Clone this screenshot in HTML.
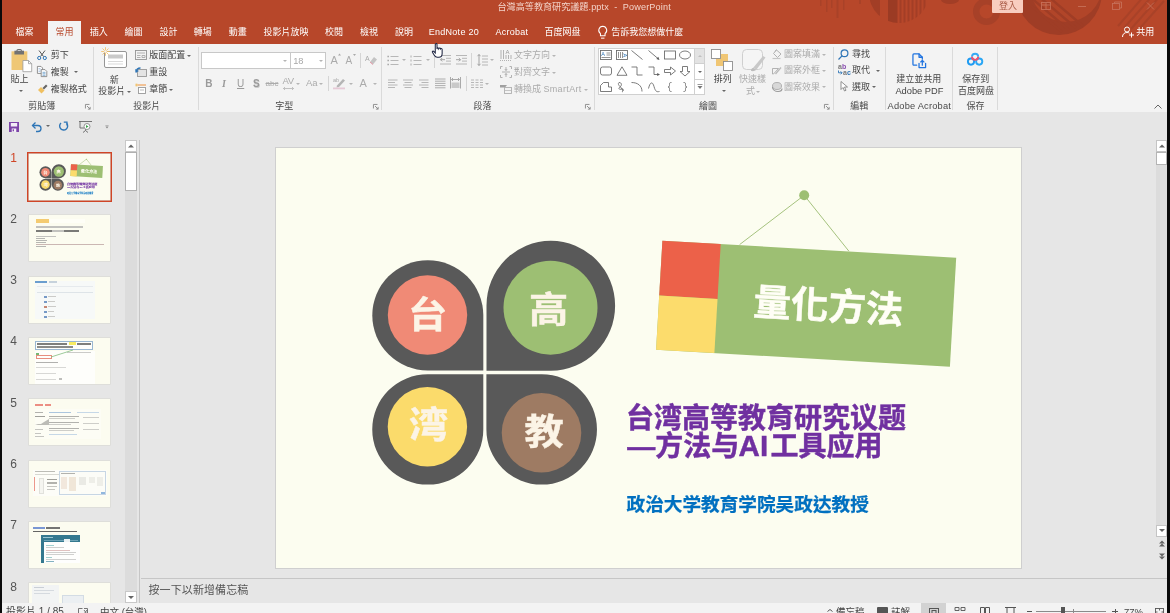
<!DOCTYPE html>
<html lang="zh-Hant">
<head>
<meta charset="utf-8">
<title>台灣高等教育研究議題.pptx - PowerPoint</title>
<style>
*{box-sizing:border-box;margin:0;padding:0}
html,body{width:1170px;height:613px;overflow:hidden;background:#e6e6e6}
body{position:relative;will-change:transform;font-family:"Liberation Sans","Noto Sans CJK TC",sans-serif;font-size:9px;color:#333}
.abs{position:absolute}
.t{position:absolute;white-space:nowrap;line-height:10px;font-size:9px}
#titlebar{left:0;top:0;width:1170px;height:44px;background:#b7472a;overflow:hidden}
#ribbon{left:0;top:44px;width:1170px;height:68px;background:#f3f3f3}
.tab{color:#fff}
#hometab{left:48px;top:21px;width:33px;height:23px;background:#f3f3f3}
.sep{position:absolute;width:1px;background:#dadada;top:48px;height:60px}
.rt{color:#444}
.gl{color:#4a4a4a;top:101px}
.dis{color:#ababab}
.sf{font-family:"Liberation Sans","Noto Sans CJK SC",sans-serif;font-weight:700}
.thumb{position:absolute;left:29px;width:81px;height:46px;background:#fcfcf0;overflow:hidden;box-shadow:0 0 0 0.600px #d9d9d2}
.tn{position:absolute;left:9.500px;font-size:12px;line-height:10px;color:#5c5c5c;width:8px;text-align:center}
svg{position:absolute;overflow:visible}
.arr{position:absolute;width:0;height:0;border-left:2px solid transparent;border-right:2px solid transparent;border-top:2px solid #666}
.arr.d{border-top-color:#b5b5b5}
</style>
</head>
<body>
<div id="titlebar" class="abs">
<svg width="1170" height="44" style="left:0;top:0" viewBox="0 0 1170 44">
<defs>
<clipPath id="cpA"><circle cx="899" cy="-7" r="30"/></clipPath>
<clipPath id="cpB"><circle cx="1059" cy="-8" r="43"/></clipPath>
</defs>
<g fill="#a94228">
<rect x="820" y="0" width="1.500" height="6"/><rect x="826" y="0" width="1.500" height="12"/><rect x="831" y="0" width="1.500" height="8"/><rect x="836.500" y="0" width="2" height="18"/><rect x="843" y="0" width="1.500" height="10"/><rect x="859" y="0" width="2" height="4"/>
</g>
<g clip-path="url(#cpA)">
<rect x="870" y="0" width="10" height="30" fill="#a23e26"/>
<rect x="888" y="0" width="9.500" height="30" fill="#9b3b24"/>
<g fill="#a33e26"><rect x="899.500" y="0" width="2" height="30"/><rect x="903.500" y="0" width="2" height="30"/><rect x="907.500" y="0" width="2" height="30"/><rect x="911.500" y="0" width="2" height="30"/><rect x="915.500" y="0" width="2" height="30"/><rect x="919.500" y="0" width="2" height="30"/><rect x="923.500" y="0" width="2" height="30"/></g>
</g>
<ellipse cx="950" cy="0" rx="9" ry="4" fill="#a23e26"/>
<circle cx="986.500" cy="11.500" r="10.300" fill="none" stroke="#a74128" stroke-width="6.500"/>
<path d="M994 3l10-8" stroke="#a74128" stroke-width="6" fill="none"/>
<g clip-path="url(#cpB)">
<rect x="1010" y="0" width="100" height="40" fill="#9f3d26"/>
<circle cx="1066" cy="-14" r="36" fill="#b14529"/>
<g stroke="#9f3d26" stroke-width="2.400" fill="none"><path d="M1022 -2l40 34M1029 -4l40 34M1036 -6l40 34M1043 -8l40 34"/></g>
</g>
<g stroke="#a94228" stroke-width="2" fill="none"><path d="M1118 26l26-30M1124 28l30-34M1131 29l30-34M1140 28l24-27"/></g>
</svg>
</div>
<div class="t " style="left:497.5px;top:1.6px;color:#f3d3c9;font-size:9.100px">台灣高等教育研究議題<span style="letter-spacing:0.150px">.pptx&nbsp; -&nbsp; PowerPoint</span></div>
<div class="abs" style="left:992px;top:0;width:31px;height:13px;background:#f8cdbf;border-radius:0 0 1px 1px"></div>
<div class="t " style="left:999px;top:1.3px;color:#a85a45">登入</div>
<svg width="130" height="14" style="left:1038px;top:0" viewBox="1038 0 130 14" fill="none" stroke="#c66f58" stroke-width="0.900">
<rect x="1041.5" y="2.5" width="9" height="7"/><path d="M1046 2.5v7M1041.5 5h9"/>
<path d="M1078 6.5h8"/>
<rect x="1112.500" y="3.500" width="7" height="6"/><path d="M1114.500 3.500v-1.500h7v6h-2"/>
<path d="M1147 2.500l7 7M1154 2.500l-7 7"/>
</svg>
<div id="hometab" class="abs"></div>
<div class="t tab" style="left:15.5px;top:26.5px;">檔案</div>
<div class="t tab" style="left:55.5px;top:26.5px;color:#b7472a">常用</div>
<div class="t tab" style="left:89.7px;top:26.5px;">插入</div>
<div class="t tab" style="left:124.6px;top:26.5px;">繪圖</div>
<div class="t tab" style="left:159.5px;top:26.5px;">設計</div>
<div class="t tab" style="left:193.8px;top:26.5px;">轉場</div>
<div class="t tab" style="left:228.7px;top:26.5px;">動畫</div>
<div class="t tab" style="left:263.6px;top:26.5px;">投影片放映</div>
<div class="t tab" style="left:325.1px;top:26.5px;">校閱</div>
<div class="t tab" style="left:360px;top:26.5px;">檢視</div>
<div class="t tab" style="left:394.9px;top:26.5px;">說明</div>
<div class="t tab" style="left:428.7px;top:26.5px;;letter-spacing:0.280px">EndNote 20</div>
<div class="t tab" style="left:495.4px;top:26.5px;;letter-spacing:0.280px">Acrobat</div>
<div class="t tab" style="left:544.6px;top:26.5px;">百度网盘</div>
<div class="t tab" style="left:611.3px;top:26.5px;">告訴我您想做什麼</div>
<div class="t tab" style="left:1136.2px;top:26.5px;">共用</div>
<svg width="11.500" height="16" style="left:597px;top:24.500px" viewBox="0 0 10 14" fill="none" stroke="#fff" stroke-width="0.900"><path d="M5 1a3.600 3.600 0 0 0-2 6.500v2h4v-2A3.600 3.600 0 0 0 5 1z"/><path d="M3.500 11.500h3"/></svg>
<svg width="12" height="12" style="left:1122px;top:26px" viewBox="0 0 12 12" fill="none" stroke="#fff" stroke-width="1"><circle cx="5" cy="3.500" r="2.500"/><path d="M0.500 11c0-3 2-4.500 4.500-4.500 1 0 1.800 0.200 2.500 0.700"/><path d="M9.500 6.500v5M7 9h5"/></svg>
<div id="ribbon" class="abs"></div>
<div class="sep" style="left:93px;top:47px;height:63px"></div>
<div class="sep" style="left:198px;top:47px;height:63px"></div>
<div class="sep" style="left:381px;top:47px;height:63px"></div>
<div class="sep" style="left:594px;top:47px;height:63px"></div>
<div class="sep" style="left:833px;top:47px;height:63px"></div>
<div class="sep" style="left:885px;top:47px;height:63px"></div>
<div class="sep" style="left:952px;top:47px;height:63px"></div>
<div class="sep" style="left:997px;top:47px;height:63px"></div>
<svg width="22" height="24" style="left:10.600px;top:48.600px" viewBox="0 0 22 24">
<rect x="0.500" y="2.300" width="15.800" height="18.700" fill="#efc775"/><rect x="3.400" y="1.700" width="9.600" height="3.800" fill="#727272"/><path d="M6 2.200v-0.700a1 1 0 0 1 1-1h2.400a1 1 0 0 1 1 1v0.700" fill="none" stroke="#727272" stroke-width="1.100"/>
<path d="M11.900 11.500h5.600l3.200 3.200v8h-8.800z" fill="#fff" stroke="#9a9a9a" stroke-width="0.800"/><path d="M17.500 11.500v3.200h3.200" fill="none" stroke="#9a9a9a" stroke-width="0.800"/></svg>
<div class="t rt" style="left:10.6px;top:74.0px;">貼上</div>
<div class="arr" style="left:18.5px;top:90.0px"></div>
<svg width="10" height="10" style="left:37px;top:50px" viewBox="0 0 10 10" fill="none"><path d="M2 0.500l4.500 6M8 0.500l-4.500 6" stroke="#555" stroke-width="1"/><circle cx="2.200" cy="8" r="1.600" stroke="#2e75b6" stroke-width="1"/><circle cx="7.800" cy="8" r="1.600" stroke="#2e75b6" stroke-width="1"/></svg>
<div class="t rt" style="left:50.8px;top:50.0px;">剪下</div>
<svg width="11" height="11" style="left:37px;top:65.800px" viewBox="0 0 11 11" fill="#fff" stroke="#777" stroke-width="0.800"><path d="M0.400 0.400h3.600l1.600 1.600v5.400h-5.200z"/><path d="M1.500 2.500h2M1.500 4h3M1.500 5.500h2" stroke="#8fb0d8" stroke-width="0.600"/><path d="M4.200 3.600h3.800l1.800 1.800v5.200h-5.600z"/><path d="M5.500 6.300h3M5.500 7.800h3M5.500 9.300h3" stroke="#2e75b6" stroke-width="0.600"/></svg>
<div class="t rt" style="left:50.8px;top:66.6px;">複製</div>
<div class="arr" style="left:74.4px;top:71.0px"></div>
<svg width="11" height="11" style="left:37px;top:83.500px" viewBox="0 0 11 11"><path d="M1 6l3-3 3.500 3.500-3 3z" fill="#f0c060"/><path d="M5.500 4l3.500-3.500 1.500 1.500-3.500 3.500z" fill="#666"/></svg>
<div class="t rt" style="left:50.8px;top:84.0px;">複製格式</div>
<div class="t gl" style="left:28.2px;top:101.0px;">剪貼簿</div>
<svg width="5.600" height="5.600" style="left:85.0px;top:104.1px" viewBox="0 0 5 5" fill="none" stroke="#888" stroke-width="0.800"><path d="M0.400 4v-3.600h3.600"/><path d="M1.800 1.800l2.800 2.800M4.600 2.600v2h-2"/></svg>
<svg width="25" height="21" style="left:102px;top:48px" viewBox="0 0 25 21"><rect x="2.500" y="3.500" width="22" height="16" rx="1.500" fill="#fff" stroke="#8a8a8a" stroke-width="0.900"/><rect x="6" y="6.500" width="15" height="4" fill="#c9c9c9"/><path d="M6 13.500h15M6 16h15" stroke="#d5d5d5" stroke-width="0.900"/><g stroke="#f2bd5e" stroke-width="0.800"><path d="M3.500 -0.800v8.600M-0.800 3.500h8.600M0.500 0.500l6 6M6.500 0.500l-6 6"/></g><circle cx="3.500" cy="3.500" r="1.300" fill="#f3f3f3"/></svg>
<div class="t rt" style="left:109.8px;top:75.0px;">新</div>
<div class="t rt" style="left:98.3px;top:86.2px;">投影片</div>
<div class="arr" style="left:127.4px;top:90.5px"></div>
<svg width="12" height="10" style="left:135px;top:50px" viewBox="0 0 12 10" fill="none" stroke="#949494" stroke-width="0.900"><rect x="0.500" y="0.500" width="11" height="9"/><path d="M2 3h8M2 5.500h3.500M2 7.500h3.500M7 5.500h3v2h-3z" stroke="#aaa"/></svg>
<div class="t rt" style="left:149.2px;top:50.0px;">版面配置</div>
<div class="arr" style="left:187.4px;top:54.5px"></div>
<svg width="12" height="10" style="left:135px;top:66.500px" viewBox="0 0 12 10" fill="none"><rect x="2.500" y="2.500" width="9" height="7" stroke="#999" stroke-width="0.900" fill="#e4e4e4"/><path d="M1 5.500c0-3 2-4.500 4.500-4.500" stroke="#2e75b6" stroke-width="1.400"/><path d="M0 2l1 3.500 3-1.500" fill="#2e75b6"/></svg>
<div class="t rt" style="left:149.2px;top:66.6px;">重設</div>
<svg width="12" height="10" style="left:135px;top:84px" viewBox="0 0 12 10" fill="none"><path d="M2.500 1h8.500" stroke="#f0913a" stroke-width="1"/><path d="M0 1h3M1.500 -0.500v3M0.400 0l2.200 2M2.600 0l-2.200 2" stroke="#f2bd5e" stroke-width="0.600"/><rect x="3.500" y="3.500" width="7" height="6" stroke="#999" stroke-width="0.900" fill="#fff"/><path d="M5 6h4" stroke="#bbb"/></svg>
<div class="t rt" style="left:149.2px;top:84.0px;">章節</div>
<div class="arr" style="left:169.0px;top:88.5px"></div>
<div class="t gl" style="left:133.3px;top:101.0px;">投影片</div>
<div class="abs" style="left:201px;top:52px;width:125px;height:17px;background:#fff;border:1px solid #c8c8c8"></div>
<div class="abs" style="left:290px;top:52px;width:1px;height:17px;background:#c8c8c8"></div>
<div class="arr d" style="left:283.1px;top:59.5px"></div>
<div class="arr d" style="left:319.4px;top:59.5px"></div>
<div class="t dis" style="left:293.2px;top:55.5px;font-size:9.300px;color:#a8a8a8">18</div>
<div class="t dis" style="left:330.5px;top:55.0px;font-size:11px">A</div>
<div class="t dis" style="left:345.5px;top:55.5px;font-size:10px">A</div>
<svg width="30" height="6" style="left:330px;top:53px" viewBox="0 0 30 6" fill="#aaa"><path d="M8 2.500l1.500-2 1.500 2z"/><path d="M23 1l1.500 2 1.500-2z"/></svg>
<div class="abs" style="left:360px;top:53px;width:1px;height:15px;background:#d5d5d5"></div>
<svg width="12" height="12" style="left:365px;top:54px" viewBox="0 0 12 12"><text x="0" y="7" font-size="7" fill="#aaa" font-family="Liberation Sans, sans-serif">A</text><path d="M5 8l4-5 3 2.500-4 5z" fill="#c4c4c4"/><path d="M5 8l3 2.500" stroke="#e89aa8" stroke-width="1"/></svg>
<div class="t dis" style="left:205.3px;top:78.6px;font-weight:700;font-size:10px;color:#9a9a9a">B</div>
<div class="t dis" style="left:222px;top:78.6px;font-style:italic;font-weight:700;font-size:10px;font-family:'Liberation Serif',serif;color:#9a9a9a">I</div>
<div class="t dis" style="left:237px;top:78.6px;text-decoration:underline;font-size:10px;color:#9a9a9a">U</div>
<div class="t dis" style="left:253px;top:78.6px;font-weight:700;font-size:10px;color:#9a9a9a;text-shadow:0.500px 0.500px 0 #ccc">S</div>
<div class="t dis" style="left:265.5px;top:78.5px;text-decoration:line-through;font-size:8px">abc</div>
<div class="t dis" style="left:282.5px;top:76.0px;font-size:9.500px;letter-spacing:-0.500px">AV</div>
<svg width="11" height="3" style="left:282.500px;top:86.500px" viewBox="0 0 11 3" fill="none" stroke="#aaa" stroke-width="0.700"><path d="M0.500 1.500h10M2 0l-1.500 1.500 1.500 1.500M9 0l1.500 1.500-1.500 1.500"/></svg>
<div class="arr d" style="left:296.2px;top:82.5px"></div>
<div class="t dis" style="left:306px;top:78.0px;font-size:9.500px">Aa</div>
<div class="arr d" style="left:319.4px;top:82.5px"></div>
<div class="abs" style="left:328px;top:76px;width:1px;height:15px;background:#d5d5d5"></div>
<svg width="14" height="12" style="left:333px;top:77px" viewBox="0 0 14 12"><text x="0" y="5" font-size="5.500" fill="#aaa" font-family="Liberation Sans, sans-serif">ab</text><path d="M4 8.500l6-6.500 2 1.500-6 6.500-2.500 0.500z" fill="#b5b5b5"/><rect x="0" y="10.500" width="12" height="1.800" fill="#e6c9d6"/></svg>
<div class="arr d" style="left:349.0px;top:82.5px"></div>
<div class="t dis" style="left:359.5px;top:77.5px;font-size:11px">A</div>
<div class="arr d" style="left:372.9px;top:82.5px"></div>
<div class="t gl" style="left:275.3px;top:101.0px;">字型</div>
<svg width="5.600" height="5.600" style="left:372.8px;top:104.1px" viewBox="0 0 5 5" fill="none" stroke="#888" stroke-width="0.800"><path d="M0.400 4v-3.600h3.600"/><path d="M1.800 1.800l2.800 2.800M4.600 2.600v2h-2"/></svg>
<svg width="12" height="11" style="left:386.500px;top:54.500px" viewBox="0 0 12 11" fill="none" stroke="#b0b0b0" stroke-width="0.900"><path d="M3.500 1.500h8M3.500 5.500h8M3.500 9.500h8"/><path d="M0.500 1.500h1.300M0.500 5.500h1.300M0.500 9.500h1.300" stroke="#999" stroke-width="1.300"/></svg>
<div class="arr d" style="left:401.9px;top:59.0px"></div>
<svg width="12" height="11" style="left:410px;top:54.500px" viewBox="0 0 12 11" fill="none" stroke="#b0b0b0" stroke-width="0.900"><path d="M3.500 1.500h8M3.500 5.500h8M3.500 9.500h8"/><path d="M1 0.500v2M1 4.500v2M1 8.500v2" stroke="#999" stroke-width="0.800"/></svg>
<div class="arr d" style="left:425.6px;top:59.0px"></div>
<div class="abs" style="left:434px;top:53px;width:1px;height:15px;background:#d5d5d5"></div>
<svg width="11" height="10" style="left:440px;top:55px" viewBox="0 0 11 10" fill="none" stroke="#b0b0b0" stroke-width="0.900"><path d="M0 0.500h11M6 3.300h5M6 6.100h5M0 9h11"/><path d="M0.500 4.700h4.500M2.200 3l-1.700 1.700 1.700 1.700" stroke="#9a9a9a"/></svg>
<svg width="11" height="10" style="left:455.500px;top:55px" viewBox="0 0 11 10" fill="none" stroke="#b0b0b0" stroke-width="0.900"><path d="M0 0.500h11M6 3.300h5M6 6.100h5M0 9h11"/><path d="M0 4.700h4.500M2.800 3l1.700 1.700-1.700 1.700" stroke="#9a9a9a"/></svg>
<div class="abs" style="left:471px;top:53px;width:1px;height:15px;background:#d5d5d5"></div>
<svg width="11" height="12" style="left:476.500px;top:54px" viewBox="0 0 11 12" fill="none" stroke="#b0b0b0" stroke-width="0.900"><path d="M5 2h6M5 5h6M5 8h6M5 11h6"/><path d="M2 0.500v11M0.500 2.200l1.500-1.700 1.500 1.700M0.500 9.800l1.500 1.700 1.500-1.700" stroke="#9a9a9a"/></svg>
<div class="arr d" style="left:490.4px;top:59.0px"></div>
<svg width="12" height="12" style="left:499.500px;top:49px" viewBox="0 0 12 12" fill="none" stroke="#aaa" stroke-width="0.900"><path d="M1 1v9M3.500 1v9M6 6v4M8.500 6v4M11 6v4" /><path d="M0 11.500h12" stroke-dasharray="1 1"/><text x="5.500" y="5" font-size="6" fill="#999" stroke="none" font-family="Liberation Sans, sans-serif">A</text></svg>
<div class="t dis" style="left:513.9px;top:50.0px;">文字方向</div>
<div class="arr d" style="left:551.9px;top:54.5px"></div>
<svg width="12" height="12" style="left:499.500px;top:66px" viewBox="0 0 12 12" fill="none" stroke="#aaa" stroke-width="0.900"><path d="M0.500 3v-2.500h2M9.500 0.500h2v2.500M0.500 9v2.500h2M9.500 11.500h2v-2.500M2 6h8M6 1v3.500M6 7.500v3.500M4.800 3l1.200 1.500 1.200-1.500M4.800 9l1.200-1.500 1.200 1.500"/></svg>
<div class="t dis" style="left:513.9px;top:67.0px;">對齊文字</div>
<div class="arr d" style="left:551.9px;top:71.5px"></div>
<svg width="12" height="10" style="left:499.500px;top:84px" viewBox="0 0 12 10" fill="none"><path d="M0 1h7l-2 2.500h-5z" fill="#a0a0a0"/><rect x="4.500" y="3.500" width="7" height="6" stroke="#b0b0b0" stroke-width="0.900" fill="#f3f3f3"/><path d="M5 6.500h6" stroke="#c5c5c5"/></svg>
<div class="t dis" style="left:513.9px;top:84.0px;">轉換成 <span style="letter-spacing:0.350px">SmartArt</span></div>
<div class="arr d" style="left:583.9px;top:88.5px"></div>
<svg width="10" height="12" style="left:387.5px;top:78px" viewBox="0 0 10 12" fill="none" stroke="#b0b0b0" stroke-width="0.9"><path d="M0 2h9.5"/><path d="M0 4.5h7"/><path d="M0 7h9.5"/><path d="M0 9.5h7"/></svg>
<svg width="10" height="12" style="left:403px;top:78px" viewBox="0 0 10 12" fill="none" stroke="#b0b0b0" stroke-width="0.9"><path d="M0 2h10"/><path d="M1.5 4.5h7.0"/><path d="M0 7h10"/><path d="M1.5 9.5h7.0"/></svg>
<svg width="10" height="12" style="left:419px;top:78px" viewBox="0 0 10 12" fill="none" stroke="#b0b0b0" stroke-width="0.9"><path d="M0 2h9.5"/><path d="M2.5 4.5h7.0"/><path d="M0 7h9.5"/><path d="M2.5 9.5h7.0"/></svg>
<svg width="11" height="12" style="left:434.5px;top:78px" viewBox="0 0 11 12" fill="none" stroke="#a5a5a5" stroke-width="0.9"><path d="M0 1h10.5"/><path d="M0 3.2h10.5"/><path d="M0 5.4h10.5"/><path d="M0 7.6h10.5"/><path d="M0 9.8h10.5"/></svg>
<svg width="11" height="12" style="left:450px;top:77px" viewBox="0 0 11 12" fill="none" stroke="#a0a0a0" stroke-width="0.900"><path d="M0.500 0v11.500M10.500 0v11.500M1.500 2.500h8M3 1l-1.500 1.500 1.500 1.500M8 1l1.500 1.500-1.500 1.500"/><rect x="1.500" y="5.500" width="8" height="5.500" fill="#c9c9c9" stroke="none"/></svg>
<div class="abs" style="left:466px;top:76px;width:1px;height:15px;background:#d5d5d5"></div>
<svg width="12" height="10" style="left:471px;top:78.500px" viewBox="0 0 12 10" fill="none" stroke="#b0b0b0" stroke-width="0.900"><path d="M0 1h3M4.500 1h3M9 1h3M0 3.500h3M4.500 3.500h3M9 3.500h3M0 6h3M4.500 6h3M9 6h3M0 8.500h3M4.500 8.500h3M9 8.500h3"/></svg>
<div class="arr d" style="left:485.2px;top:82.5px"></div>
<div class="t gl" style="left:473.5px;top:101.0px;">段落</div>
<svg width="5.600" height="5.600" style="left:585.2px;top:104.1px" viewBox="0 0 5 5" fill="none" stroke="#888" stroke-width="0.800"><path d="M0.400 4v-3.600h3.600"/><path d="M1.800 1.800l2.800 2.800M4.600 2.600v2h-2"/></svg>
<div class="abs" style="left:598px;top:48px;width:107px;height:47px;background:#fff;border:1px solid #d0d0d0"></div>
<div class="abs" style="left:694px;top:49px;width:10px;height:14px;background:#e3e3e3"></div>
<div class="abs" style="left:694px;top:48px;width:1px;height:47px;background:#d0d0d0"></div>
<div class="abs" style="left:694px;top:63px;width:11px;height:1px;background:#d0d0d0"></div>
<div class="abs" style="left:694px;top:79px;width:11px;height:1px;background:#d0d0d0"></div>
<svg width="6" height="4" style="left:696.500px;top:54px" viewBox="0 0 6 4" fill="#c0c0c0"><path d="M1 3l2-2 2 2z"/></svg>
<div class="arr" style="left:697.7px;top:70.5px"></div>
<svg width="6" height="6" style="left:696.700px;top:84px" viewBox="0 0 6 6" fill="#777"><path d="M0.500 0h5v0.800h-5zM0.500 2h5l-2.500 3z"/></svg>
<svg width="12" height="10" style="left:600.0px;top:50.4px" viewBox="0 0 12 10" fill="none" stroke="#666" stroke-width="0.850"><rect x="0.500" y="0.500" width="11" height="9"/><path d="M6.500 3h4M6.500 5h4M1.500 7.500h9" stroke-width="0.700"/><text x="1.200" y="6" font-size="5.500" fill="#2e75b6" stroke="none" font-family="Liberation Sans, sans-serif">A</text></svg>
<svg width="12" height="10" style="left:616.0px;top:50.4px" viewBox="0 0 12 10" fill="none" stroke="#666" stroke-width="0.850"><rect x="0.500" y="0.500" width="11" height="9"/><path d="M2.500 2v6M4.500 2v6M6.500 2v6" stroke-width="0.700"/><text x="7.500" y="7" font-size="5.500" fill="#2e75b6" stroke="none" font-family="Liberation Sans, sans-serif" transform="rotate(90 9 5)">A</text></svg>
<svg width="12" height="10" style="left:631.4px;top:50.4px" viewBox="0 0 12 10" fill="none" stroke="#666" stroke-width="0.850"><path d="M0.500 0.500l11 9"/></svg>
<svg width="12" height="10" style="left:647.5px;top:50.4px" viewBox="0 0 12 10" fill="none" stroke="#666" stroke-width="0.850"><path d="M0.500 0.500l10 8.500"/><path d="M11.500 10l-3.200-1 2-2.200z" fill="#5a5a5a" stroke="none"/></svg>
<svg width="12" height="10" style="left:663.5px;top:50.4px" viewBox="0 0 12 10" fill="none" stroke="#666" stroke-width="0.850"><rect x="0.500" y="1" width="11" height="8"/></svg>
<svg width="12" height="10" style="left:679.0px;top:50.4px" viewBox="0 0 12 10" fill="none" stroke="#666" stroke-width="0.850"><ellipse cx="6" cy="5" rx="5.500" ry="4"/></svg>
<svg width="12" height="10" style="left:600.0px;top:66.4px" viewBox="0 0 12 10" fill="none" stroke="#666" stroke-width="0.850"><rect x="0.500" y="1" width="11" height="8" rx="2"/></svg>
<svg width="12" height="10" style="left:616.0px;top:66.4px" viewBox="0 0 12 10" fill="none" stroke="#666" stroke-width="0.850"><path d="M6 0.800l5 8.500h-10z"/></svg>
<svg width="12" height="10" style="left:631.4px;top:66.4px" viewBox="0 0 12 10" fill="none" stroke="#666" stroke-width="0.850"><path d="M0.500 1h5.500v8h5.500"/></svg>
<svg width="12" height="10" style="left:647.5px;top:66.4px" viewBox="0 0 12 10" fill="none" stroke="#666" stroke-width="0.850"><path d="M0.500 1h5.500v7.500h4.500"/><path d="M12 8.500l-2.800 1.500v-3z" fill="#5a5a5a" stroke="none"/></svg>
<svg width="12" height="10" style="left:663.5px;top:66.4px" viewBox="0 0 12 10" fill="none" stroke="#666" stroke-width="0.850"><path d="M0.500 3.500h6v-2.500l5 4-5 4v-2.500h-6z"/></svg>
<svg width="12" height="10" style="left:679.0px;top:66.4px" viewBox="0 0 12 10" fill="none" stroke="#666" stroke-width="0.850"><path d="M3.500 0.500h5v5h2.500l-5 4.500-5-4.500h2.500z"/></svg>
<svg width="12" height="10" style="left:600.0px;top:82.0px" viewBox="0 0 12 10" fill="none" stroke="#666" stroke-width="0.850"><path d="M0.500 9.500v-6l3-3h5v4.500h3v4.500z"/></svg>
<svg width="12" height="10" style="left:616.0px;top:82.0px" viewBox="0 0 12 10" fill="none" stroke="#666" stroke-width="0.850"><path d="M3 0.500c3 0 3 3 1 4.500s-1 3 2 2-1 3 1 3M3 0.500c-1.500 1.500 0 3 1.500 4.500l3 4"/></svg>
<svg width="12" height="10" style="left:631.4px;top:82.0px" viewBox="0 0 12 10" fill="none" stroke="#666" stroke-width="0.850"><path d="M0.500 0.500c6 0 10.500 3 10.500 9"/></svg>
<svg width="12" height="10" style="left:647.5px;top:82.0px" viewBox="0 0 12 10" fill="none" stroke="#666" stroke-width="0.850"><path d="M0.500 6.500c1.500-6.500 4-7.500 5.500-2s3 5.500 5.500 5"/></svg>
<svg width="12" height="10" style="left:663.5px;top:82.0px" viewBox="0 0 12 10" fill="none" stroke="#666" stroke-width="0.850"><path d="M7.500 0.500c-2 0-2 0.500-2 2s0 2.500-1.500 2.500c1.500 0 1.500 1 1.500 2.500s0 2 2 2"/></svg>
<svg width="12" height="10" style="left:679.0px;top:82.0px" viewBox="0 0 12 10" fill="none" stroke="#666" stroke-width="0.850"><path d="M4.500 0.500c2 0 2 0.500 2 2s0 2.500 1.500 2.500c-1.500 0-1.500 1-1.500 2.500s0 2-2 2"/></svg>
<svg width="22" height="22" style="left:711px;top:48.500px" viewBox="0 0 22 22"><rect x="5" y="5" width="12" height="12" fill="#f0c674"/><rect x="0.500" y="0.500" width="9" height="9" fill="#fff" stroke="#8e8e8e" stroke-width="0.900"/><rect x="12.500" y="12.500" width="9" height="9" fill="#fff" stroke="#8e8e8e" stroke-width="0.900"/></svg>
<div class="t rt" style="left:713.8px;top:74.1px;">排列</div>
<div class="arr" style="left:721.5px;top:90.0px"></div>
<svg width="24" height="23" style="left:741.500px;top:48.500px" viewBox="0 0 24 23" fill="none"><rect x="0.500" y="0.500" width="20" height="20" rx="4" stroke="#cfcfcf" stroke-width="1" fill="#f5f5f5"/><path d="M11 19l10-12 2.500 1.500-9 12z" fill="#c8c8c8"/><path d="M9 22c0-2 1-3.500 2.500-3l2.500 1.800c-1 1.500-3 1.500-5 1.200z" fill="#bdbdbd"/></svg>
<div class="t dis" style="left:738.9px;top:74.1px;">快速樣</div>
<div class="t dis" style="left:746px;top:86.0px;">式</div>
<div class="arr d" style="left:756.4px;top:90.5px"></div>
<svg width="10" height="10" style="left:771.500px;top:49px" viewBox="0 0 10 10" fill="none" stroke="#aaa" stroke-width="0.900"><path d="M4.500 1l4.500 4-3.500 3.500-4-4z"/><path d="M3 2.500l1.500-2"/><path d="M0.500 9.500h8" stroke="#c5c5c5" stroke-width="1.200"/></svg>
<div class="t dis" style="left:784px;top:49.0px;">圖案填滿</div>
<div class="arr d" style="left:822.4px;top:53.5px"></div>
<svg width="10" height="10" style="left:771.500px;top:65.500px" viewBox="0 0 10 10" fill="none" stroke="#aaa" stroke-width="0.900"><path d="M0.500 2.500h6l-5 5.500h-1z"/><path d="M3 7.500l5.500-6.500 1 1-5.500 6.500z" fill="#bbb" stroke="none"/></svg>
<div class="t dis" style="left:784px;top:65.3px;">圖案外框</div>
<div class="arr d" style="left:822.4px;top:69.8px"></div>
<svg width="10" height="10" style="left:771.500px;top:81.500px" viewBox="0 0 10 10" fill="none"><ellipse cx="5" cy="4" rx="4.500" ry="3.500" fill="#d8d8d8" stroke="#aaa" stroke-width="0.900"/><path d="M0.500 5c0 3 3 4.500 5.500 4.500s4-1 4-3" stroke="#9a9a9a" stroke-width="1.200"/></svg>
<div class="t dis" style="left:784px;top:81.6px;">圖案效果</div>
<div class="arr d" style="left:822.4px;top:86.1px"></div>
<div class="t gl" style="left:699px;top:101.0px;">繪圖</div>
<svg width="5.600" height="5.600" style="left:823.8px;top:104.1px" viewBox="0 0 5 5" fill="none" stroke="#888" stroke-width="0.800"><path d="M0.400 4v-3.600h3.600"/><path d="M1.800 1.800l2.800 2.800M4.600 2.600v2h-2"/></svg>
<svg width="11" height="11" style="left:838px;top:48.500px" viewBox="0 0 11 11" fill="none" stroke="#2e75b6" stroke-width="1.200"><circle cx="6.500" cy="4.200" r="3.400"/><path d="M4 6.800l-3.500 3.700"/></svg>
<div class="t rt" style="left:852px;top:49.0px;">尋找</div>
<svg width="13" height="12" style="left:837.500px;top:64px" viewBox="0 0 13 12"><text x="0" y="5.300" font-size="7" font-weight="700" fill="#777" font-family="Liberation Sans, sans-serif">a<tspan fill="#8a4fb0">b</tspan></text><text x="5" y="11.300" font-size="7" font-weight="700" fill="#777" font-family="Liberation Sans, sans-serif">a<tspan fill="#2e75b6">c</tspan></text><path d="M0.500 6.500v2.300h3.500M2.600 7.300l1.500 1.500-1.500 1.500" fill="none" stroke="#2e75b6" stroke-width="0.900"/></svg>
<div class="t rt" style="left:852px;top:65.0px;">取代</div>
<div class="arr" style="left:876.0px;top:69.5px"></div>
<svg width="9" height="11" style="left:840px;top:81px" viewBox="0 0 9 11"><path d="M1 0.500v8l2-2 1.500 3.500 1.500-0.700-1.500-3.300h3z" fill="#fff" stroke="#777" stroke-width="0.800"/></svg>
<div class="t rt" style="left:852px;top:81.5px;">選取</div>
<div class="arr" style="left:872.2px;top:86.0px"></div>
<div class="t gl" style="left:850.3px;top:101.0px;">編輯</div>
<svg width="15" height="16" style="left:912px;top:52.500px" viewBox="0 0 16 17" fill="none" stroke="#2174e0" stroke-width="1.350" stroke-linecap="round" stroke-linejoin="round"><path d="M5 13h-3a1 1 0 0 1-1-1v-10a1 1 0 0 1 1-1h5.500l3.500 3.500v2"/><path d="M7.500 1v3.500h3.500"/><path d="M7.500 11v4.500h7v-4.500M11 13v-5M9.300 9.500l1.700-1.700 1.700 1.700"/></svg>
<div class="t rt" style="left:896.3px;top:73.7px;">建立並共用</div>
<div class="t rt" style="left:895.4px;top:85.9px;font-size:9.300px">Adobe PDF</div>
<div class="t gl" style="left:887.5px;top:101.0px;font-size:9.300px;letter-spacing:0.200px">Adobe Acrobat</div>
<svg width="18" height="14" style="left:966px;top:52px" viewBox="966 52 18 14" fill="none" stroke-width="1.900"><circle cx="971" cy="61.600" r="3.100" stroke="#1e9bf2"/><circle cx="979.200" cy="61.600" r="3.100" stroke="#29a6f5"/><path d="M972 56.800a3.100 3.100 0 0 1 6.200 0" stroke="#35aaf5"/><path d="M972 56.800a3.100 3.100 0 0 0 6.200 0" stroke="#f0506e"/></svg>
<div class="t rt" style="left:962.2px;top:73.7px;">保存到</div>
<div class="t rt" style="left:957.9px;top:85.9px;">百度网盘</div>
<div class="t gl" style="left:966.6px;top:101.0px;">保存</div>
<svg width="8" height="5" style="left:1154px;top:104px" viewBox="0 0 8 5" fill="none" stroke="#666" stroke-width="1"><path d="M0.500 4.500l3.500-3.500 3.500 3.500"/></svg>
<svg width="10" height="10" style="left:9px;top:121.800px" viewBox="0 0 11 10" preserveAspectRatio="none"><path d="M0 0h11v10h-11z" fill="#7d45a8"/><rect x="2" y="1" width="7" height="3.500" fill="#f3eef6"/><rect x="3" y="6.500" width="5" height="3.500" fill="#f3eef6"/><rect x="4" y="7.300" width="1.500" height="2" fill="#7d45a8"/></svg>
<svg width="12" height="10" style="left:31px;top:121.500px" viewBox="0 0 12 10" fill="none" stroke="#2e75b6" stroke-width="1.300"><path d="M1.500 3.500h5.500a3 3 0 0 1 0 6h-2"/><path d="M4.500 0.500l-3 3 3 3"/></svg>
<div class="arr" style="left:46.2px;top:125.3px"></div>
<svg width="11" height="11" style="left:58px;top:121px" viewBox="0 0 11 11" fill="none" stroke="#2e75b6" stroke-width="1.400"><path d="M3 2a4 4 0 1 0 5.600 0.300"/><path d="M5.800 1.200h3.200v3.200" stroke-width="1.200"/></svg>
<svg width="13" height="12" style="left:79px;top:120.500px" viewBox="0 0 13 12" fill="none" stroke="#666" stroke-width="0.900"><path d="M0 0.500h13M1 0.500v6.500h4M6.500 7v2.500M4 11.500l2.500-2 2.500 2"/><circle cx="8" cy="5.500" r="3" fill="#fff" stroke="#888"/><path d="M7 4l2.500 1.500-2.500 1.500z" fill="#3aa04a" stroke="none"/></svg>
<svg width="4" height="4" style="left:105.200px;top:125px" viewBox="0 0 5 5" fill="#8a8a8a"><path d="M0.500 0h4v0.700h-4zM0.500 2h4l-2 2.500z"/></svg>
<div class="abs" style="left:125px;top:140px;width:12px;height:463px;background:#dcdcdc"></div>
<div class="abs" style="left:125px;top:140px;width:12px;height:12px;background:#fff;border:1px solid #c8c8c8"></div>
<svg width="6" height="4" style="left:128px;top:144px" viewBox="0 0 6 4" fill="#666"><path d="M0 3.500l3-3 3 3z"/></svg>
<div class="abs" style="left:125px;top:152px;width:12px;height:39px;background:#fff;border:1px solid #b0b0b0"></div>
<div class="abs" style="left:125px;top:591px;width:12px;height:12px;background:#fff;border:1px solid #c8c8c8"></div>
<svg width="6" height="4" style="left:128px;top:595.500px" viewBox="0 0 6 4" fill="#666"><path d="M0 0l3 3 3-3z"/></svg>
<div class="abs" style="left:139px;top:140px;width:1px;height:463px;background:#c6c6c6"></div>
<div class="abs" style="left:27px;top:152px;width:85px;height:50px;background:#d04526"></div>
<div class="tn" style="top:152.5px;color:#d04526">1</div>
<div class="tn" style="top:213.8px;color:#555">2</div>
<div class="tn" style="top:275.1px;color:#555">3</div>
<div class="tn" style="top:336.4px;color:#555">4</div>
<div class="tn" style="top:397.7px;color:#555">5</div>
<div class="tn" style="top:459.0px;color:#555">6</div>
<div class="tn" style="top:520.3px;color:#555">7</div>
<div class="tn" style="top:581.6px;color:#555">8</div>
<div class="thumb" style="top:154.0px"><svg width="745" height="420" viewBox="276 148 745 420" style="left:0;top:0;transform:scale(0.10872,0.10952);transform-origin:0 0">
<g fill="#595959">
<path d="M427.800 260.200a55.500 55.100 0 1 0 0 110.200h55.500v-55.100a55.500 55.100 0 0 0-55.500-55.100z"/>
<path d="M550.800 240.700a64.300 65 0 0 1 0 130h-64.300v-65a64.300 65 0 0 1 64.300-65z"/>
<path d="M427.800 484.600a55.500 55.200 0 1 1 0-110.400h55.500v55.200a55.500 55.200 0 0 1-55.500 55.200z"/>
<path d="M541.700 484.600a55.300 55.200 0 0 0 0-110.400h-55.300v55.200a55.300 55.200 0 0 0 55.300 55.200z"/>
</g>
<circle cx="427.500" cy="315" r="39.700" fill="#f08a76"/>
<circle cx="550.500" cy="307.700" r="47" fill="#9dbf73"/>
<circle cx="427.400" cy="426.800" r="39.700" fill="#fbdb6b"/>
<circle cx="541.500" cy="432.800" r="39.800" fill="#9e7b63"/>
<g class="sf" fill="#fcf4e6" stroke="#fcf4e6" stroke-width="0.450" text-anchor="middle" font-weight="700">
<text transform="translate(427.5 328) scale(1.09 1)" x="0" y="0" font-size="36">台</text>
<text transform="translate(548.5 322.5) scale(1.09 1)" x="0" y="0" font-size="36">高</text>
<text transform="translate(428.7 438) scale(1.09 1)" x="0" y="0" font-size="36">湾</text>
<text transform="translate(544 445.3) scale(1.09 1)" x="0" y="0" font-size="36">教</text>
</g>
<path d="M739.600 244.600L804.200 195.300L848.900 251.200" fill="none" stroke="#a5c27e" stroke-width="5"/>
<circle cx="804.200" cy="195.300" r="5" fill="#9dbf73"/>
<g transform="rotate(3.310 806.150 303.700)">
<rect x="659" y="249.100" width="294.300" height="109.200" fill="#9dbf73"/>
<rect x="659" y="249.100" width="58.400" height="55" fill="#ec6149"/>
<rect x="659" y="304.100" width="58.400" height="54.200" fill="#fcdc6c"/>
<text class="sf" x="828.500" y="318" font-size="37.500" font-weight="700" fill="#fffef6" stroke="#fffef6" stroke-width="0.500" text-anchor="middle">量化方法</text>
</g>
<g class="sf" font-weight="700">
<g fill="#7030a0" stroke="#7030a0" stroke="none" font-size="28">
<text x="626" y="428" transform="translate(0 428) scale(1 0.78) translate(0 -428)">台湾高等教育研究议题</text>
<text x="627.300" y="455.500" transform="translate(0 455.5) scale(1 0.78) translate(0 -455.5)">—方法与</text>
<text x="738.600" y="455.500" transform="translate(0 455.5) scale(1 0.78) translate(0 -455.5)" font-size="29.500">AI</text>
<text x="770.500" y="455.500" transform="translate(0 455.5) scale(1 0.78) translate(0 -455.5)">工具应用</text>
</g>
<text x="626.500" y="510.500" font-size="18.650" fill="#0070c0" stroke="#0070c0" stroke-width="0.250">政治大学教育学院吴政达教授</text>
</g>
</svg></div>
<div class="thumb" style="top:215.3px"><div class="abs" style="left:0;top:0;width:81px;height:46px;opacity:0.7"><div class="abs" style="left:7px;top:4px;width:13px;height:4px;background:#f2b73c"></div>
<div class="abs" style="left:21px;top:4px;width:35px;height:4px;background:#fffffb"></div>
<div class="abs" style="left:7px;top:11px;width:47px;height:1.500px;background:#a9a9a9"></div>
<div class="abs" style="left:7px;top:15px;width:16px;height:1.500px;background:#444"></div><div class="abs" style="left:23px;top:15px;width:12px;height:1.500px;background:#aaa"></div><div class="abs" style="left:35px;top:15px;width:15px;height:1.500px;background:#444"></div>
<div class="abs" style="left:7px;top:21px;width:20px;height:1px;background:#aaa"></div>
<div class="abs" style="left:7px;top:23px;width:9px;height:1px;background:#999"></div>
<div class="abs" style="left:7px;top:25px;width:11px;height:1px;background:#999"></div>
<div class="abs" style="left:7px;top:27px;width:10px;height:1px;background:#999"></div>
<div class="abs" style="left:7px;top:29px;width:68px;height:1px;background:#b79a9a"></div>
<div class="abs" style="left:7px;top:31px;width:10px;height:1px;background:#999"></div></div></div>
<div class="thumb" style="top:276.6px"><div class="abs" style="left:0;top:0;width:81px;height:46px;opacity:0.75"><div class="abs" style="left:6px;top:4px;width:60px;height:38px;background:#f6f8fb"></div>
<div class="abs" style="left:6px;top:4px;width:12px;height:2px;background:#3b7fc4"></div>
<div class="abs" style="left:20px;top:4px;width:8px;height:2px;background:#b5c4d6"></div>
<div class="abs" style="left:8px;top:9px;width:56px;height:1px;background:#dfe5ec"></div>
<div class="abs" style="left:8px;top:15px;width:56px;height:1px;background:#d5dce6"></div>
<div class="abs" style="left:15px;top:19px;width:3px;height:2px;background:#4a78b8"></div><div class="abs" style="left:19px;top:19px;width:8px;height:1px;background:#bbb"></div>
<div class="abs" style="left:15px;top:24px;width:3px;height:2px;background:#4a78b8"></div><div class="abs" style="left:19px;top:24px;width:7px;height:1px;background:#bbb"></div>
<div class="abs" style="left:15px;top:29px;width:3px;height:2px;background:#b5604a"></div><div class="abs" style="left:19px;top:29px;width:8px;height:1px;background:#bbb"></div>
<div class="abs" style="left:15px;top:34px;width:3px;height:2px;background:#4a78b8"></div><div class="abs" style="left:19px;top:34px;width:6px;height:1px;background:#bbb"></div>
<div class="abs" style="left:15px;top:39px;width:3px;height:2px;background:#4a78b8"></div><div class="abs" style="left:19px;top:39px;width:7px;height:1px;background:#bbb"></div></div></div>
<div class="thumb" style="top:337.9px"><div class="abs" style="left:0;top:0;width:81px;height:46px;opacity:0.75"><div class="abs" style="left:6px;top:3px;width:58px;height:9px;background:#fff;border:1px solid #7aa0c8"></div>
<div class="abs" style="left:8px;top:5px;width:30px;height:2px;background:#555"></div><div class="abs" style="left:40px;top:4px;width:7px;height:3px;background:#f7e733"></div><div class="abs" style="left:48px;top:5px;width:14px;height:2px;background:#555"></div>
<div class="abs" style="left:8px;top:8px;width:36px;height:2px;background:#666"></div>
<div class="abs" style="left:6px;top:13px;width:60px;height:33px;background:#fff"></div>
<div class="abs" style="left:7px;top:17px;width:16px;height:4px;border:1px solid #e06a5a"></div>
<div class="abs" style="left:7px;top:15px;width:3px;height:2px;background:#4aa04a"></div>
<div class="abs" style="left:38px;top:14px;width:24px;height:1px;background:#bbb"></div>
<div class="abs" style="left:7px;top:24px;width:22px;height:1px;background:#999"></div>
<div class="abs" style="left:7px;top:29px;width:30px;height:1px;background:#ccc"></div>
<div class="abs" style="left:7px;top:35px;width:20px;height:1px;background:#ccc"></div>
<div class="abs" style="left:7px;top:41px;width:20px;height:1px;background:#ccc"></div><div class="abs" style="left:30px;top:40px;width:3px;height:2px;background:#aaa"></div>
<svg width="30" height="12" style="left:22px;top:11px" viewBox="0 0 30 12"><path d="M0 8L22 1" stroke="#5aa85a" stroke-width="0.800" fill="none"/></svg></div></div>
<div class="thumb" style="top:399.2px"><div class="abs" style="left:0;top:0;width:81px;height:46px;opacity:0.55"><div class="abs" style="left:6px;top:5px;width:8px;height:2px;background:#e0352b"></div><div class="abs" style="left:16px;top:5px;width:6px;height:2px;background:#e0352b"></div>
<div class="abs" style="left:6px;top:10px;width:66px;height:30px;background:#fefefa"></div>
<div class="abs" style="left:6px;top:13px;width:8px;height:1px;background:#777"></div>
<div class="abs" style="left:20px;top:13px;width:22px;height:1px;background:#6b9bd0"></div><div class="abs" style="left:48px;top:13px;width:22px;height:1px;background:#9bbbe0"></div>
<div class="abs" style="left:6px;top:17px;width:10px;height:1px;background:#555"></div>
<svg width="14" height="6" style="left:6px;top:20px" viewBox="0 0 14 6"><path d="M0 6L3 5L6 5L9 3L14 0V6z" fill="#888"/></svg>
<div class="abs" style="left:20px;top:17px;width:30px;height:1px;background:#777"></div><div class="abs" style="left:20px;top:19px;width:26px;height:1px;background:#aaa"></div><div class="abs" style="left:54px;top:18px;width:16px;height:1px;background:#aaa"></div>
<div class="abs" style="left:20px;top:23px;width:30px;height:1px;background:#777"></div><div class="abs" style="left:20px;top:25px;width:22px;height:1px;background:#aaa"></div><div class="abs" style="left:54px;top:24px;width:16px;height:1px;background:#aaa"></div>
<div class="abs" style="left:20px;top:29px;width:30px;height:1px;background:#777"></div><div class="abs" style="left:20px;top:31px;width:25px;height:1px;background:#aaa"></div><div class="abs" style="left:54px;top:30px;width:16px;height:1px;background:#aaa"></div>
<div class="abs" style="left:20px;top:35px;width:28px;height:1px;background:#9bbbe0"></div>
<div class="abs" style="left:6px;top:30px;width:8px;height:1px;background:#999"></div><div class="abs" style="left:6px;top:34px;width:6px;height:1px;background:#999"></div><div class="abs" style="left:6px;top:37px;width:9px;height:1px;background:#999"></div></div></div>
<div class="thumb" style="top:460.5px"><div class="abs" style="left:0;top:0;width:81px;height:46px;opacity:0.55"><div class="abs" style="left:4px;top:9px;width:74px;height:26px;background:#fff"></div>
<div class="abs" style="left:6px;top:10px;width:20px;height:1px;background:#888"></div>
<div class="abs" style="left:6px;top:13px;width:24px;height:1px;background:#bbb"></div>
<div class="abs" style="left:5px;top:16px;width:1px;height:14px;background:#e0483a"></div>
<div class="abs" style="left:10px;top:17px;width:5px;height:16px;background:#f0f0f0;border:1px solid #ccc"></div>
<div class="abs" style="left:18px;top:18px;width:10px;height:1px;background:#555"></div><div class="abs" style="left:18px;top:21px;width:10px;height:2px;background:#777"></div><div class="abs" style="left:18px;top:25px;width:10px;height:1px;background:#999"></div><div class="abs" style="left:18px;top:28px;width:8px;height:1px;background:#999"></div>
<div class="abs" style="left:30px;top:10px;width:47px;height:24px;background:#fdfdfd;border:1px solid #9cb8dc"></div>
<div class="abs" style="left:32px;top:12px;width:14px;height:1px;background:#777"></div>
<div class="abs" style="left:32px;top:16px;width:6px;height:12px;background:#ead9cf"></div>
<div class="abs" style="left:40px;top:16px;width:7px;height:14px;background:#e8d5c5"></div>
<div class="abs" style="left:50px;top:16px;width:7px;height:8px;background:#ddd"></div>
<div class="abs" style="left:60px;top:16px;width:6px;height:6px;background:#e3e3e3"></div><div class="abs" style="left:68px;top:16px;width:6px;height:9px;background:#e3e3e3"></div>
<div class="abs" style="left:72px;top:31px;width:4px;height:2px;background:#3b7fd0"></div></div></div>
<div class="thumb" style="top:521.8px"><div class="abs" style="left:0;top:0;width:81px;height:46px;opacity:0.9"><div class="abs" style="left:4px;top:5.500px;width:12px;height:1.500px;background:#6b8bd0"></div><div class="abs" style="left:17px;top:5.500px;width:14px;height:1.500px;background:#666"></div>
<div class="abs" style="left:4px;top:9px;width:44px;height:1.500px;background:#555"></div>
<div class="abs" style="left:12px;top:13px;width:39px;height:28px;background:#1f6a85"></div>
<div class="abs" style="left:15px;top:20px;width:36px;height:21px;background:#fff"></div>
<div class="abs" style="left:14px;top:15px;width:10px;height:1px;background:#8fc0d0"></div>
<div class="abs" style="left:15px;top:18px;width:34px;height:1px;background:#5f9ab0"></div>
<div class="abs" style="left:35px;top:17px;width:6px;height:3px;background:#eaf2f5"></div>
<div class="abs" style="left:17px;top:23px;width:8px;height:1px;background:#9cc"></div>
<div class="abs" style="left:17px;top:25px;width:18px;height:1px;background:#ccc"></div>
<div class="abs" style="left:17px;top:28px;width:24px;height:1px;background:#dbb"></div><div class="abs" style="left:17px;top:30px;width:30px;height:1px;background:#ccc"></div><div class="abs" style="left:17px;top:32px;width:28px;height:1px;background:#ccc"></div>
<div class="abs" style="left:17px;top:35px;width:6px;height:1px;background:#9cc"></div><div class="abs" style="left:17px;top:37px;width:30px;height:1px;background:#ccc"></div><div class="abs" style="left:17px;top:39.500px;width:8px;height:1px;background:#7ab"></div></div></div>
<div class="thumb" style="top:583.1px"><div class="abs" style="left:0;top:0;width:81px;height:46px;opacity:0.7"><div class="abs" style="left:3px;top:2px;width:27px;height:20px;background:#eef1f6"></div>
<div class="abs" style="left:5px;top:4px;width:10px;height:1px;background:#b5bccb"></div><div class="abs" style="left:5px;top:7px;width:20px;height:1px;background:#c5ccd8"></div><div class="abs" style="left:5px;top:10px;width:16px;height:1px;background:#c5ccd8"></div>
<div class="abs" style="left:33px;top:12px;width:22px;height:10px;background:#e4eaf3;border:1px solid #c3cfe0"></div></div></div>
<div class="abs" style="left:275px;top:147px;width:747px;height:422px;background:#cfcfcf"></div>
<div class="abs" id="slide" style="left:276px;top:148px;width:745px;height:420px;background:#fcfdf0;overflow:hidden"></div>
<svg width="745" height="420" viewBox="276 148 745 420" style="left:276px;top:148px">
<g fill="#595959">
<path d="M427.800 260.200a55.500 55.100 0 1 0 0 110.200h55.500v-55.100a55.500 55.100 0 0 0-55.500-55.100z"/>
<path d="M550.800 240.700a64.300 65 0 0 1 0 130h-64.300v-65a64.300 65 0 0 1 64.300-65z"/>
<path d="M427.800 484.600a55.500 55.200 0 1 1 0-110.400h55.500v55.200a55.500 55.200 0 0 1-55.500 55.200z"/>
<path d="M541.700 484.600a55.300 55.200 0 0 0 0-110.400h-55.300v55.200a55.300 55.200 0 0 0 55.300 55.200z"/>
</g>
<circle cx="427.500" cy="315" r="39.700" fill="#f08a76"/>
<circle cx="550.500" cy="307.700" r="47" fill="#9dbf73"/>
<circle cx="427.400" cy="426.800" r="39.700" fill="#fbdb6b"/>
<circle cx="541.500" cy="432.800" r="39.800" fill="#9e7b63"/>
<g class="sf" fill="#fcf4e6" stroke="#fcf4e6" stroke-width="0.450" text-anchor="middle" font-weight="700">
<text transform="translate(427.5 328) scale(1.09 1)" x="0" y="0" font-size="36">台</text>
<text transform="translate(548.5 322.5) scale(1.09 1)" x="0" y="0" font-size="36">高</text>
<text transform="translate(428.7 438) scale(1.09 1)" x="0" y="0" font-size="36">湾</text>
<text transform="translate(544 445.3) scale(1.09 1)" x="0" y="0" font-size="36">教</text>
</g>
<path d="M739.600 244.600L804.200 195.300L848.900 251.200" fill="none" stroke="#a5c27e" stroke-width="1"/>
<circle cx="804.200" cy="195.300" r="5" fill="#9dbf73"/>
<g transform="rotate(3.310 806.150 303.700)">
<rect x="659" y="249.100" width="294.300" height="109.200" fill="#9dbf73"/>
<rect x="659" y="249.100" width="58.400" height="55" fill="#ec6149"/>
<rect x="659" y="304.100" width="58.400" height="54.200" fill="#fcdc6c"/>
<text class="sf" x="828.500" y="318" font-size="37.500" font-weight="700" fill="#fffef6" stroke="#fffef6" stroke-width="0.500" text-anchor="middle">量化方法</text>
</g>
<g class="sf" font-weight="700">
<g fill="#7030a0" stroke="#7030a0" stroke-width="0.450" font-size="28">
<text x="626" y="428">台湾高等教育研究议题</text>
<text x="627.300" y="455.500">—方法与</text>
<text x="738.600" y="455.500" font-size="29.500">AI</text>
<text x="770.500" y="455.500">工具应用</text>
</g>
<text x="626.500" y="510.500" font-size="18.650" fill="#0070c0" stroke="#0070c0" stroke-width="0.250">政治大学教育学院吴政达教授</text>
</g>
</svg>
<div class="abs" style="left:1156px;top:140px;width:11px;height:396px;background:#dcdcdc"></div>
<div class="abs" style="left:1156px;top:140px;width:11px;height:12px;background:#fff;border:1px solid #c4c4c4"></div>
<svg width="6" height="4" style="left:1158.500px;top:144px" viewBox="0 0 6 4" fill="#666"><path d="M0 3.500l3-3 3 3z"/></svg>
<div class="abs" style="left:1156px;top:152px;width:11px;height:13px;background:#fff;border:1px solid #b4b4b4"></div>
<div class="abs" style="left:1156px;top:525px;width:11px;height:11.500px;background:#fff;border:1px solid #c4c4c4"></div>
<svg width="6" height="4" style="left:1158.500px;top:529.300px" viewBox="0 0 6 4" fill="#666"><path d="M0 0l3 3 3-3z"/></svg>
<svg width="6" height="7" style="left:1158.500px;top:540px" viewBox="0 0 6 7" fill="#666"><path d="M0 3.500l3-3 3 3zM0 6.500l3-3 3 3z"/></svg>
<svg width="6" height="7" style="left:1158.500px;top:553px" viewBox="0 0 6 7" fill="#666"><path d="M0 0.500l3 3 3-3zM0 3.500l3 3 3-3z"/></svg>
<div class="abs" style="left:141px;top:578px;width:1026px;height:1px;background:#c6c6c6"></div>
<div class="t " style="left:148.5px;top:585.0px;font-size:11px;color:#555;letter-spacing:0.100px">按一下以新增備忘稿</div>
<div class="abs" style="left:0;top:603px;width:1170px;height:10px;background:#f3f3f3"></div>
<div class="t " style="left:6px;top:607.3px;color:#444;font-size:10px">投影片 1 / 85</div>
<div class="t " style="left:100px;top:607.0px;color:#444;font-size:9.500px">中文 (台灣)</div>
<svg width="10" height="6" style="left:78px;top:608px" viewBox="0 0 10 6" fill="none" stroke="#666" stroke-width="0.900"><path d="M0.500 6v-5.500h4M6 0.500h3.500v5.500M6 2l3 4M9 2l-3 4"/></svg>
<div class="t " style="left:836px;top:607.0px;color:#444;font-size:9.500px">備忘稿</div>
<svg width="8" height="5" style="left:826px;top:608.500px" viewBox="0 0 8 5" fill="none" stroke="#555" stroke-width="1"><path d="M0 4.500h8M1.500 2.500l2.500-2 2.500 2"/></svg>
<div class="abs" style="left:877px;top:607px;width:11px;height:6px;background:#555;border-radius:1px 1px 0 0"></div>
<div class="t " style="left:891px;top:607.0px;color:#444;font-size:9.500px">註解</div>
<div class="abs" style="left:921px;top:603px;width:25px;height:10px;background:#d2d2d2"></div>
<svg width="110" height="7" style="left:925px;top:606px" viewBox="925 606 110 7" fill="none" stroke="#555" stroke-width="1"><rect x="929.500" y="608.500" width="9" height="6"/><rect x="932" y="610.500" width="4" height="3"/><path d="M955 607.500h4v3h-4zM961 607.500h4v3h-4z" stroke-width="0.900"/><path d="M980.500 613v-5.500h4v5.500M985.500 613v-5.500h4v5.500" /><path d="M1005 607.500h11M1007 607.500v5.500M1014 607.500v5.500"/></svg>
<div class="abs" style="left:1036px;top:611px;width:70px;height:1px;background:#8a8a8a"></div>
<div class="abs" style="left:1061px;top:607px;width:4px;height:6px;background:#555"></div>
<div class="abs" style="left:1073px;top:609px;width:1px;height:4px;background:#8a8a8a"></div>
<div class="abs" style="left:1027px;top:611px;width:5px;height:1px;background:#555"></div>
<div class="abs" style="left:1112px;top:611px;width:6px;height:1px;background:#555"></div><div class="abs" style="left:1114.500px;top:609px;width:1px;height:4px;background:#555"></div>
<div class="t " style="left:1124px;top:606.6px;color:#444;font-size:9.500px">77%</div>
<svg width="9" height="6" style="left:1155px;top:607.500px" viewBox="0 0 9 6" fill="none" stroke="#555" stroke-width="0.900"><rect x="0.500" y="0.500" width="8" height="7"/><path d="M4.500 0.500v2M0.500 4h2M8.500 4h-2"/></svg>
<svg width="12" height="15.500" style="left:431.800px;top:42.800px" viewBox="0 0 11 14"><path d="M3 1.200c0-1 1.600-1 1.600 0v4.200l0.200-0.600c0.300-0.700 1.400-0.500 1.400 0.300l0.200-0.300c0.400-0.600 1.400-0.300 1.400 0.500l0.200-0.200c0.500-0.400 1.300 0 1.300 0.700v3.700c0 2-1 3.500-3 3.500h-1.500c-1.300 0-2-0.700-2.700-1.800l-1.700-2.800c-0.400-0.800 0.600-1.400 1.200-0.800l1.400 1.400z" fill="#fff" stroke="#1c2340" stroke-width="0.950"/></svg>
<div class="abs" style="left:0;top:0;width:2px;height:613px;background:#0a0a0a"></div>
<div class="abs" style="left:1167px;top:0;width:3px;height:613px;background:#0a0a0a"></div>
</body>
</html>
